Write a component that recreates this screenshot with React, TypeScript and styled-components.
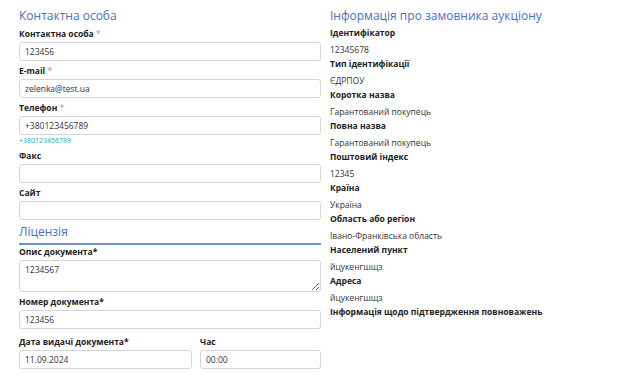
import React from "react";
import styled, { createGlobalStyle } from "styled-components";

const GlobalStyle = createGlobalStyle`
  html, body {
    margin: 0;
    padding: 0;
    background: #ffffff;
  }
  body {
    font-family: "Open Sans", "Noto Sans", sans-serif;
    color: #222222;
  }
`;

const customerInfo = [
  { label: "Ідентифікатор", value: "12345678" },
  { label: "Тип ідентифікації", value: "ЄДРПОУ" },
  { label: "Коротка назва", value: "Гарантований покупець" },
  { label: "Повна назва", value: "Гарантований покупець" },
  { label: "Поштовий індекс", value: "12345" },
  { label: "Країна", value: "Україна" },
  { label: "Область або регіон", value: "Івано-Франківська область" },
  { label: "Населений пункт", value: "йцукенгшщз" },
  { label: "Адреса", value: "йцукенгшщз" },
  { label: "Інформація щодо підтвердження повноважень", value: "" },
];

export default function App() {
  return (
    <>
      <GlobalStyle />
      <Page>
        <Column>
          <SectionTitle>Контактна особа</SectionTitle>
          <Field>
            <Label>
              Контактна особа <Req>*</Req>
            </Label>
            <Input defaultValue="123456" />
          </Field>
          <Field>
            <Label>
              E-mail <Req>*</Req>
            </Label>
            <Input defaultValue="zelenka@test.ua" />
          </Field>
          <Field>
            <Label>
              Телефон <Req>*</Req>
            </Label>
            <Input defaultValue="+380123456789" />
            <Hint>+380123456789</Hint>
          </Field>
          <Field>
            <Label>Факс</Label>
            <Input />
          </Field>
          <Field>
            <Label>Сайт</Label>
            <Input />
          </Field>

          <SectionTitle underlined>Ліцензія</SectionTitle>
          <Field>
            <Label tight>Опис документа*</Label>
            <TextArea defaultValue="1234567" />
          </Field>
          <Field>
            <Label>Номер документа*</Label>
            <Input defaultValue="123456" />
          </Field>
          <DateRow>
            <Field>
              <Label>Дата видачі документа*</Label>
              <Input defaultValue="11.09.2024" />
            </Field>
            <Field>
              <Label>Час</Label>
              <Input defaultValue="00:00" />
            </Field>
          </DateRow>
        </Column>

        <Column>
          <SectionTitle>Інформація про замовника аукціону</SectionTitle>
          {customerInfo.map((item) => (
            <InfoItem key={item.label}>
              <InfoLabel>{item.label}</InfoLabel>
              {item.value && <InfoValue>{item.value}</InfoValue>}
            </InfoItem>
          ))}
        </Column>
      </Page>
    </>
  );
}

const Page = styled.div`
  display: grid;
  grid-template-columns: 302px 1fr;
  column-gap: 9px;
  padding: 6px 19px 0;
`;

const Column = styled.div`
  display: flex;
  flex-direction: column;
`;

const SectionTitle = styled.div<{ underlined?: boolean }>`
  font-size: 12px;
  line-height: 19px;
  color: #4c72b5;
  font-weight: 400;
  margin-top: ${({ underlined }) => (underlined ? "1px" : "0")};
  padding-bottom: ${({ underlined }) => (underlined ? "2px" : "0")};
  border-bottom: ${({ underlined }) =>
    underlined ? "2px solid #6d8fca" : "none"};
`;

const Field = styled.div`
  display: flex;
  flex-direction: column;
  margin-bottom: 1px;
`;

const Label = styled.label<{ tight?: boolean }>`
  font-size: 8.5px;
  line-height: 13px;
  font-weight: 700;
  color: #222222;
  margin-top: ${({ tight }) => (tight ? "0" : "2px")};
  margin-bottom: 2px;
`;

const Req = styled.span`
  color: #e08080;
  font-weight: 400;
`;

const Input = styled.input`
  box-sizing: border-box;
  width: 100%;
  height: 19px;
  padding: 0 5px;
  border: 1px solid #d6d6d6;
  border-radius: 3px;
  font-family: inherit;
  font-size: 8.5px;
  color: #333333;
  background: #ffffff;
  outline: none;
`;

const TextArea = styled.textarea`
  box-sizing: border-box;
  width: 100%;
  height: 32px;
  padding: 3px 5px;
  border: 1px solid #d6d6d6;
  border-radius: 3px;
  font-family: inherit;
  font-size: 8.5px;
  color: #333333;
  outline: none;
  resize: vertical;
`;

const Hint = styled.div`
  font-size: 7px;
  line-height: 11px;
  color: #35a5a5;
`;

const DateRow = styled.div`
  display: grid;
  grid-template-columns: 173px 1fr;
  column-gap: 8px;
  margin-top: 3px;
`;

const InfoItem = styled.div`
  display: flex;
  flex-direction: column;
`;

const InfoLabel = styled.div`
  font-size: 8.5px;
  line-height: 15px;
  font-weight: 700;
  color: #222222;
`;

const InfoValue = styled.div`
  font-size: 8.5px;
  line-height: 13px;
  padding-top: 3px;
  color: #333333;
`;
